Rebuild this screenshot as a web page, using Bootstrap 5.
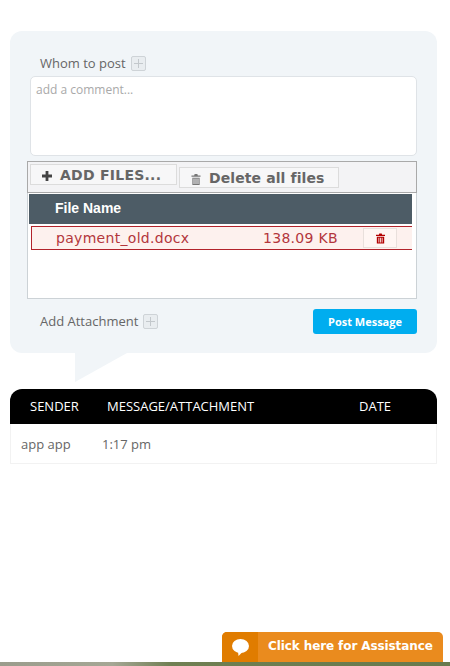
<!DOCTYPE html>
<html lang="en">
<head>
  <meta charset="UTF-8">
  <meta name="viewport" content="width=device-width, initial-scale=1">
  <title>Post Message</title>
  <link href="https://cdn.jsdelivr.net/npm/bootstrap@5.3.3/dist/css/bootstrap.min.css" rel="stylesheet">
  <style>
    html, body { height: 666px; overflow: hidden; }
    body { font-family: "Open Sans", sans-serif; color: #666; background: #fff; position: relative; }
    .post-panel { margin: 31px 13px 0 10px; padding: 21px 20px 19px 20px; height: 322px; background: #f1f5f8; border-radius: 12px; position: relative; }
    .post-tail { position: absolute; left: 65px; top: 322px; width: 52px; height: 29px; display: block; }
    .label-row { gap: 5px; }
    .field-label { font-size: 13px; line-height: 22px; margin-left: 10px; color: #666; }
    .plus-box { width: 15px; height: 15px; border: 1px solid #ced3d7; border-radius: 2px; background: #e9edf0; display: flex; align-items: center; justify-content: center; }
    .comment-box { height: 80px; margin-top: 2px; border: 1px solid #dfe3e7; border-radius: 5px; background: #fff; padding: 5px 5px; font-size: 12px; color: #a9a9a9; line-height: 16px; }
    .file-area { margin: 5px 0 0 -3px; height: 138px; background: #fff; border: 1px solid #ccd2d6; border-top: 0; }
    .file-toolbar { height: 32px; margin: 0 -1px; background: #f3f3f5; border: 1px solid #a9a9a9; padding: 2px 2px; gap: 2px; font-family: "DejaVu Sans", sans-serif; font-weight: 700; color: #666; }
    .toolbar-btn { height: 21px; background: #f7f7f8; border: 1px solid #dcdcdc; font-size: 14px; line-height: 21px; white-space: nowrap; }
    .btn-add { width: 147px; padding-left: 11px; letter-spacing: .25px; }
    .btn-del { width: 160px; margin-top: 3px; padding-left: 11px; letter-spacing: .1px; }
    .file-head { height: 30px; margin: 1px 4px 0 1px; background: #4d5c66; color: #fff; font: 700 14px/29px "Liberation Sans", sans-serif; padding-left: 26px; }
    .file-row { height: 24px; margin: 2px 4px 0 3px; background: #fdf1ee; border: 1px solid #b2232b; border-right: 0; color: #b3363c; font: 14px/22px "DejaVu Sans", sans-serif; letter-spacing: .3px; }
    .file-name { width: 231px; padding-left: 24px; }
    .file-size { width: 100px; }
    .file-del { width: 34px; height: 20px; background: #fff6f3; border: 1px solid #e9e0dc; margin-top: 1px; }
    .attach-row { height: 36px; margin-top: 7px; }
    .btn-post { width: 104px; height: 25px; margin-top: 3px; padding: 0; border: 0; border-radius: 3px; background: #00adef; color: #fff; font-size: 11px; font-weight: 700; line-height: 25px; }
    .msg-list { margin: 36px 13px 0 10px; }
    .msg-head { height: 35px; background: #000; color: #fff; border-radius: 12px 12px 0 0; font-size: 13px; line-height: 35px; }
    .msg-row { height: 40px; background: #fff; border: 1px solid #f2f2f2; border-top: 0; font-size: 13px; line-height: 40px; color: #666; }
    .help-tab { position: absolute; left: 222px; top: 632px; width: 221px; height: 30px; background: #ea8b1e; border-radius: 5px 5px 0 0; color: #fff; font: 700 12px/29px "DejaVu Sans", sans-serif; letter-spacing: -.1px; overflow: hidden; }
    .help-icon { width: 36px; height: 30px; background: #e07c00; }
    .ground-strip { position: absolute; left: 0; right: 0; top: 662px; height: 4px; background: linear-gradient(90deg, #9a9c8c 0, #a5a795 25%, #6f7f52 38%, #687a4e 100%); }
  </style>
</head>
<body>
  <div class="post-panel">
    <div class="d-flex align-items-center label-row">
      <span class="field-label">Whom to post</span>
      <span class="plus-box"><svg width="9" height="9" viewBox="0 0 9 9"><path d="M4 0h1v4h4v1H5v4H4V5H0V4h4z" fill="#c3c8cc"/></svg></span>
    </div>
    <div class="comment-box">add a comment...</div>

    <div class="file-area">
      <div class="file-toolbar d-flex align-items-start">
        <div class="toolbar-btn btn-add">
          <svg width="10" height="10" viewBox="0 0 10 10" class="me-2"><path d="M3.600 0h2.800v3.600H10v2.800H6.400V10H3.600V6.400H0V3.600h3.600z" fill="#444"/></svg>ADD FILES...
        </div>
        <div class="toolbar-btn btn-del">
          <svg width="10" height="11" viewBox="0 0 11 12" class="me-2"><path d="M4 0h3l.5 1.500H10.500V3H.5V1.500H3.500zM1.500 4h8v8h-8zM2.800 5v6h1V5zm2.200 0v6h1V5zm2.200 0v6h1V5z" fill="#777"/></svg>Delete all files
        </div>
      </div>
      <div class="file-head">File Name</div>
      <div class="file-row d-flex">
        <div class="file-name">payment_old.docx</div>
        <div class="file-size text-nowrap">138.09 KB</div>
        <div class="file-del d-flex align-items-center justify-content-center">
          <svg width="9" height="11" viewBox="0 0 11 12"><path d="M4 0h3l.5 1.500H11V3H0V1.500h3.500zM1 4h9v8H1zM3 5v6h1V5zm2 0v6h1V5zm2 0v6h1V5z" fill="#b30000"/></svg>
        </div>
      </div>
    </div>

    <div class="attach-row d-flex align-items-start justify-content-between">
      <div class="d-flex align-items-center label-row pt-1">
        <span class="field-label">Add Attachment</span>
        <span class="plus-box"><svg width="9" height="9" viewBox="0 0 9 9"><path d="M4 0h1v4h4v1H5v4H4V5H0V4h4z" fill="#c3c8cc"/></svg></span>
      </div>
      <button type="button" class="btn-post">Post Message</button>
    </div>

    <svg class="post-tail" viewBox="0 0 52 29"><path d="M0 0h52L0 29z" fill="#f1f5f8"/></svg>
  </div>

  <div class="msg-list">
    <div class="msg-head d-flex">
      <div style="width:97px;padding-left:20px">SENDER</div>
      <div style="width:252px">MESSAGE/ATTACHMENT</div>
      <div>DATE</div>
    </div>
    <div class="msg-row d-flex">
      <div style="width:91px;padding-left:10px">app app</div>
      <div>1:17 pm</div>
    </div>
  </div>

  <div class="help-tab d-flex">
    <div class="help-icon d-flex align-items-center justify-content-center">
      <svg width="17" height="17" viewBox="0 0 17 17"><ellipse cx="8.500" cy="7" rx="8.500" ry="7" fill="#fff"/><path d="M6 12l.5 5 4-4z" fill="#fff"/></svg>
    </div>
    <div class="text-nowrap" style="padding-left:10px">Click here for Assistance</div>
  </div>
  <div class="ground-strip"></div>

  <script src="https://cdn.jsdelivr.net/npm/bootstrap@5.3.3/dist/js/bootstrap.bundle.min.js"></script>
</body>
</html>
